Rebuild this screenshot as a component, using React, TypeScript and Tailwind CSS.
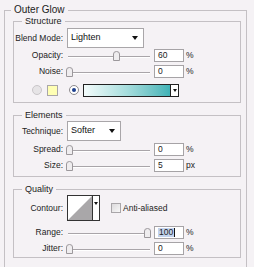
import React from "react";

const label = "w-[49px] shrink-0 text-right text-[8.5px] leading-none text-[#222]";

function Arrow() {
  return (
    <svg width="6" height="4" viewBox="0 0 6 4">
      <path d="M0 0H6L3 4Z" fill="#111" />
    </svg>
  );
}

function Slider({ pct }: { pct: number }) {
  return (
    <div className="relative h-full w-[84px] shrink-0">
      <div className="absolute left-[1px] right-[1px] top-1/2 h-px bg-[#a9a5a9]" />
      <div className="absolute left-[1px] right-[1px] top-1/2 mt-px h-px bg-white" />
      <svg
        className="absolute top-1/2 -mt-[5px]"
        style={{ left: -1 + pct * 0.78 }}
        width="7"
        height="10"
        viewBox="0 0 7 10"
      >
        <path d="M0.5 3Q0.5 0.5 3.5 0.5Q6.5 0.5 6.5 3V9.5H0.5Z" fill="#efedef" stroke="#9c989c" />
      </svg>
    </div>
  );
}

function NumField({ value, selected }: { value: string; selected?: boolean }) {
  return (
    <div className="ml-[3px] flex h-[13px] w-[30px] shrink-0 items-center border border-[#a6a3a6] bg-white pl-[3px] text-[8.5px] leading-none text-[#222]">
      {selected ? (
        <>
          <span className="bg-[#c3d3ee] px-px">{value}</span>
          <span className="h-[9px] w-px bg-[#111]" />
        </>
      ) : (
        value
      )}
    </div>
  );
}

function SliderRow({ name, pct, value, unit, selected, className = "" }: {
  name: string; pct: number; value: string; unit: string; selected?: boolean; className?: string;
}) {
  return (
    <div className={`flex h-[15px] items-center ${className}`}>
      <span className={label}>{name}</span>
      <div className="ml-[4px] flex h-full items-center">
        <Slider pct={pct} />
        <NumField value={value} selected={selected} />
        <span className="ml-[2px] text-[8.5px] leading-none text-[#222]">{unit}</span>
      </div>
    </div>
  );
}

function Select({ text, width }: { text: string; width: string }) {
  return (
    <div className={`ml-[4px] flex h-[20px] ${width} items-center justify-between border border-[#a9a6a9] bg-white pl-[3px] pr-[5px] text-[9px] text-[#111]`}>
      <span>{text}</span>
      <Arrow />
    </div>
  );
}

const legend = "ml-[8px] px-[3px] text-[9px] leading-[12px] text-[#222]";
const box = "border border-[#c4c0c4] w-[228px] ml-[8px]";

export default function App() {
  return (
    <div className="h-[267px] w-[254px] overflow-hidden bg-[#f5f2f5] pl-[4px] pt-[3px] font-['Liberation_Sans',Arial,sans-serif]">
      <fieldset className="w-[243px] border border-b-0 border-[#c4c0c4] pb-[20px]">
        <legend className="ml-[6px] px-[3px] text-[10px] leading-[14px] text-[#222]">Outer Glow</legend>

        {/* Structure */}
        <fieldset className={`${box} -mt-[2px] pb-[5px]`}>
          <legend className={legend}>Structure</legend>
          <div className="mt-px flex h-[20px] items-center">
            <span className={label}>Blend Mode:</span>
            <Select text="Lighten" width="w-[77px]" />
          </div>
          <SliderRow name="Opacity:" pct={60} value="60" unit="%" />
          <SliderRow name="Noise:" pct={0} value="0" unit="%" className="mt-px" />
          <div className="mt-[4px] flex h-[14px] items-center">
            <span className="ml-[18px] h-[10px] w-[10px] rounded-full border border-[#c9c6c9] bg-[#e6e4e6]" />
            <span className="ml-[5px] h-[11px] w-[11px] border border-[#a9a6a9] bg-[#ffffb4]" />
            <span className="ml-[11px] flex h-[10px] w-[10px] items-center justify-center rounded-full border border-[#8d8a8d] bg-white">
              <span className="h-[4px] w-[4px] rounded-full bg-[#1d3f8e]" />
            </span>
            <div className="ml-[4px] flex h-[13px] items-stretch border border-[#222]">
              <span className="w-[86px] bg-gradient-to-r from-[#f3fbfb] via-[#a6dddd] to-[#3fb3b7]" />
              <span className="flex w-[8px] items-center justify-center border-l border-[#222] bg-white">
                <svg width="4" height="3" viewBox="0 0 4 3"><path d="M0 0H4L2 3Z" fill="#111" /></svg>
              </span>
            </div>
          </div>
        </fieldset>

        {/* Elements */}
        <fieldset className={`${box} mt-[6px] pb-[3px]`}>
          <legend className={legend}>Elements</legend>
          <div className="flex h-[20px] items-center">
            <span className={label}>Technique:</span>
            <Select text="Softer" width="w-[54px]" />
          </div>
          <SliderRow name="Spread:" pct={0} value="0" unit="%" className="mt-px" />
          <SliderRow name="Size:" pct={0} value="5" unit="px" className="mt-px" />
        </fieldset>

        {/* Quality */}
        <fieldset className={`${box} mt-[6px] pb-px`}>
          <legend className={legend}>Quality</legend>
          <div className="flex h-[26px] items-center">
            <span className={label}>Contour:</span>
            <div className="ml-[4px] flex h-[26px] border border-[#333]">
              <svg width="24" height="24" viewBox="0 0 24 24" className="bg-white">
                <path d="M0 24L24 0V24Z" fill="#a9a7a9" />
              </svg>
              <span className="flex w-[7px] items-start justify-center border-l border-[#333] bg-white pt-[6px]">
                <svg width="4" height="3" viewBox="0 0 4 3"><path d="M0 0H4L2 3Z" fill="#111" /></svg>
              </span>
            </div>
            <span className="ml-[11px] h-[10px] w-[10px] border border-[#a9a6a9] bg-gradient-to-br from-[#dcdadc] to-[#f8f8f8]" />
            <span className="ml-[2px] text-[8.5px] leading-none text-[#222]">Anti-aliased</span>
          </div>
          <SliderRow name="Range:" pct={100} value="100" unit="%" selected className="mt-[4px]" />
          <SliderRow name="Jitter:" pct={0} value="0" unit="%" className="mt-px" />
        </fieldset>
      </fieldset>
    </div>
  );
}
